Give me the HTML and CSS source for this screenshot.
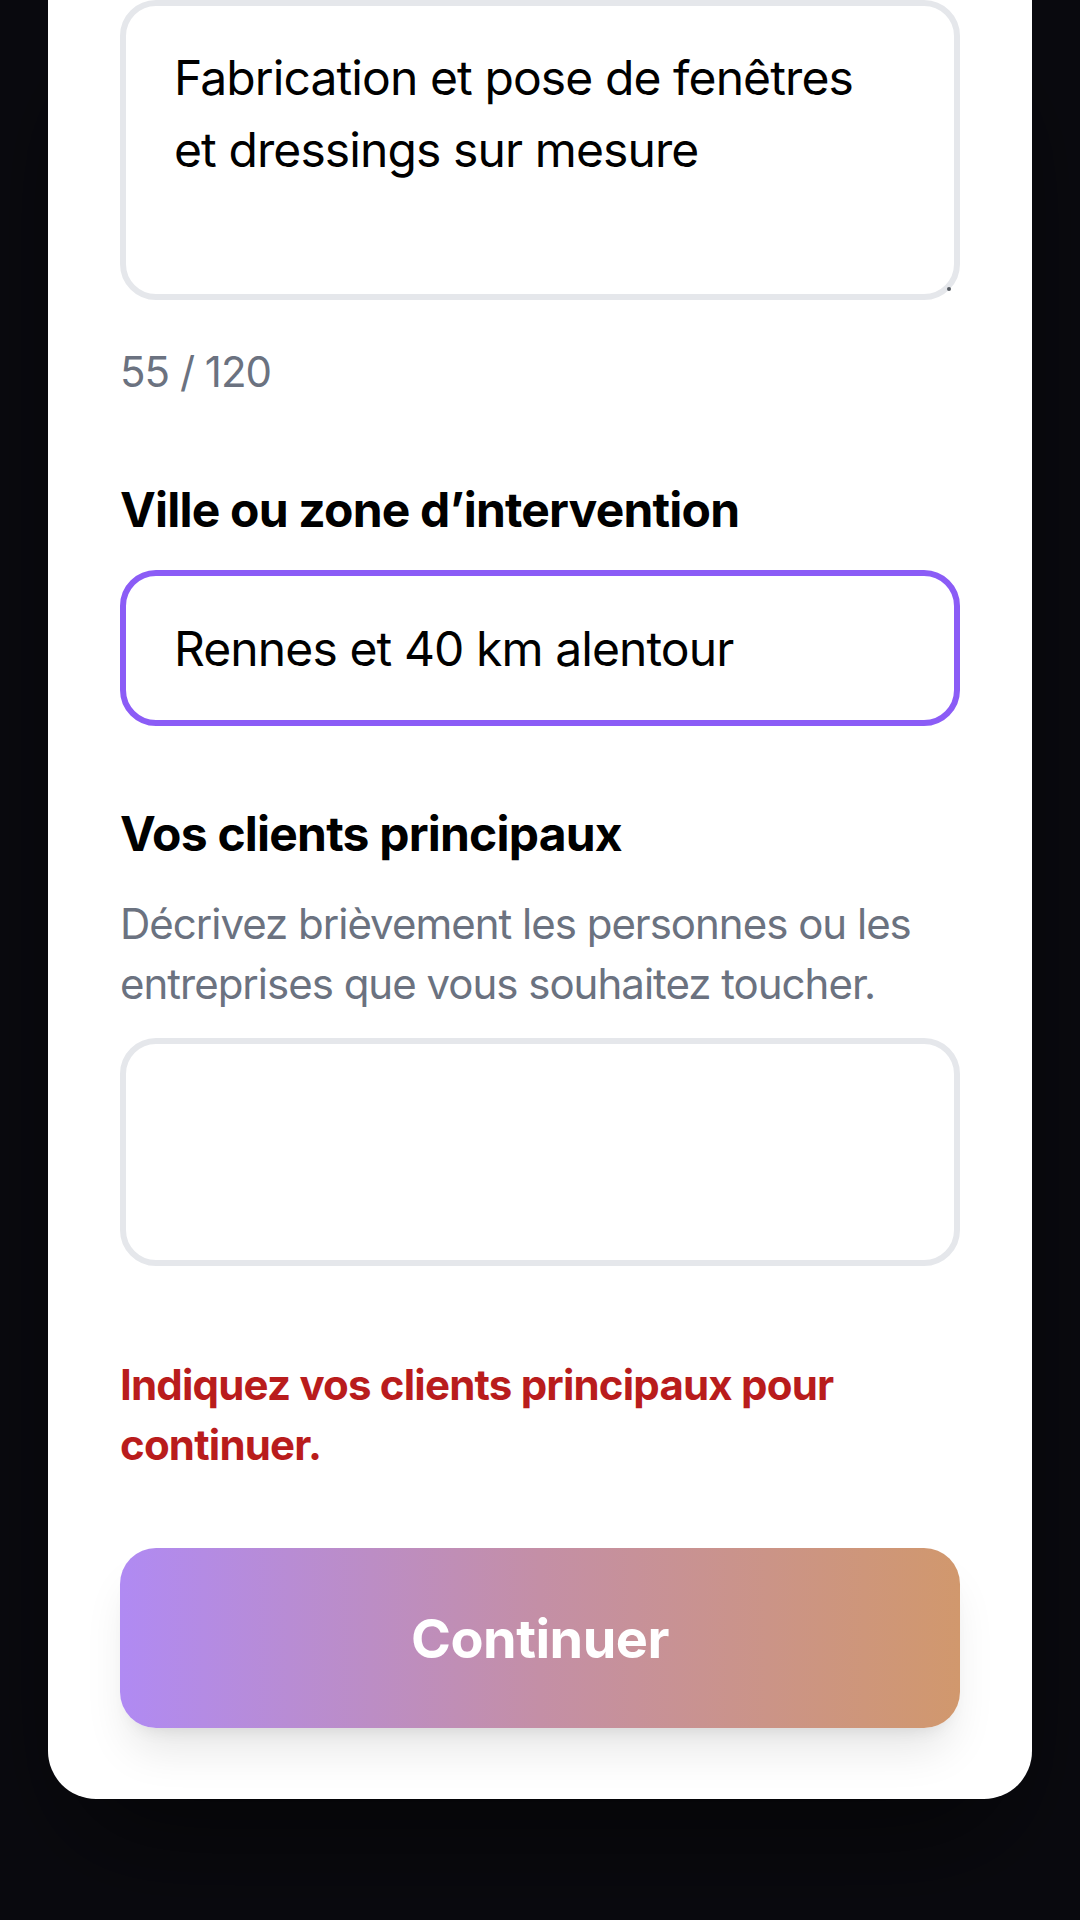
FILE: index.html
```html
<!DOCTYPE html>
<html lang="fr">
<head>
<meta charset="utf-8">
<title>Formulaire</title>
<link rel="stylesheet" href="styles.css">
</head>
<body>
<main class="card">
  <div class="area-wrap">
    <textarea class="field field--area3" rows="3">Fabrication et pose de fenêtres et dressings sur mesure</textarea>
    <span class="grip" aria-hidden="true"></span>
  </div>
  <p class="counter">55 / 120</p>

  <label class="label" for="zone">Ville ou zone d’intervention</label>
  <input id="zone" class="field field--input field--focus" type="text" value="Rennes et 40 km alentour">

  <label class="label" for="clients">Vos clients principaux</label>
  <p class="hint">Décrivez brièvement les personnes ou les entreprises que vous souhaitez toucher.</p>
  <textarea id="clients" class="field field--area2" rows="2"></textarea>

  <p class="error">Indiquez vos clients principaux pour continuer.</p>

  <button class="btn" type="button">Continuer</button>
</main>
</body>
</html>
```

FILE: styles.css
```css
html, body {
  margin: 0;
  padding: 0;
}

body {
  background: #0a0a0f;
  width: 1080px;
  height: 1920px;
  overflow: hidden;
  font-family: Inter, "Liberation Sans", sans-serif;
  color: #000;
}

.card {
  margin: 0 48px;
  background: #ffffff;
  border-radius: 0 0 48px 48px;
  padding: 0 72px 71px;
  display: flex;
  flex-direction: column;
  box-shadow: 0 60px 120px -30px rgba(0, 0, 0, 0.6);
}

.area-wrap {
  position: relative;
}

.grip {
  position: absolute;
  right: 9px;
  bottom: 9px;
  width: 4px;
  height: 4px;
  border-radius: 50%;
  background: #555a61;
}

.field {
  display: block;
  box-sizing: border-box;
  width: 840px;
  margin: 0;
  border: 6px solid #e5e7eb;
  border-radius: 36px;
  background: #fff;
  font-family: Inter, "Liberation Sans", sans-serif;
  font-size: 48px;
  line-height: 72px;
  letter-spacing: -0.9px;
  color: #000;
  outline: none;
}

.field--area3 {
  height: 300px;
  padding: 36px 48px;
  resize: none;
  overflow: hidden;
}

.field--area2 {
  height: 228px;
  padding: 36px 48px;
  margin-top: 24px;
  resize: none;
}

.field--input {
  height: 156px;
  padding: 0 48px;
  margin-top: 24px;
}

.field--focus {
  border-color: #8b5cf6;
}

.counter {
  margin: 42px 0 0;
  font-size: 42px;
  line-height: 60px;
  letter-spacing: -1px;
  color: #6b7280;
}

.label {
  display: block;
  margin-top: 72px;
  font-size: 48px;
  line-height: 72px;
  font-weight: 700;
  letter-spacing: -0.8px;
  color: #000;
}

.hint {
  margin: 24px 0 0;
  font-size: 42px;
  line-height: 60px;
  letter-spacing: -1px;
  color: #6b7280;
}

.error {
  margin: 89px 0 0;
  font-size: 42px;
  line-height: 60px;
  font-weight: 700;
  letter-spacing: -0.8px;
  color: #b91c1c;
}

.btn {
  margin-top: 73px;
  height: 180px;
  width: 840px;
  border: 0;
  border-radius: 36px;
  background: linear-gradient(90deg, #b08af3 0%, #c48fa6 50%, #d1986d 100%);
  color: #ffffff;
  font-family: Inter, "Liberation Sans", sans-serif;
  font-size: 54px;
  font-weight: 700;
  letter-spacing: -0.5px;
  box-shadow: 0 30px 45px -9px rgba(0, 0, 0, 0.1), 0 12px 18px -12px rgba(0, 0, 0, 0.1);
}
```
